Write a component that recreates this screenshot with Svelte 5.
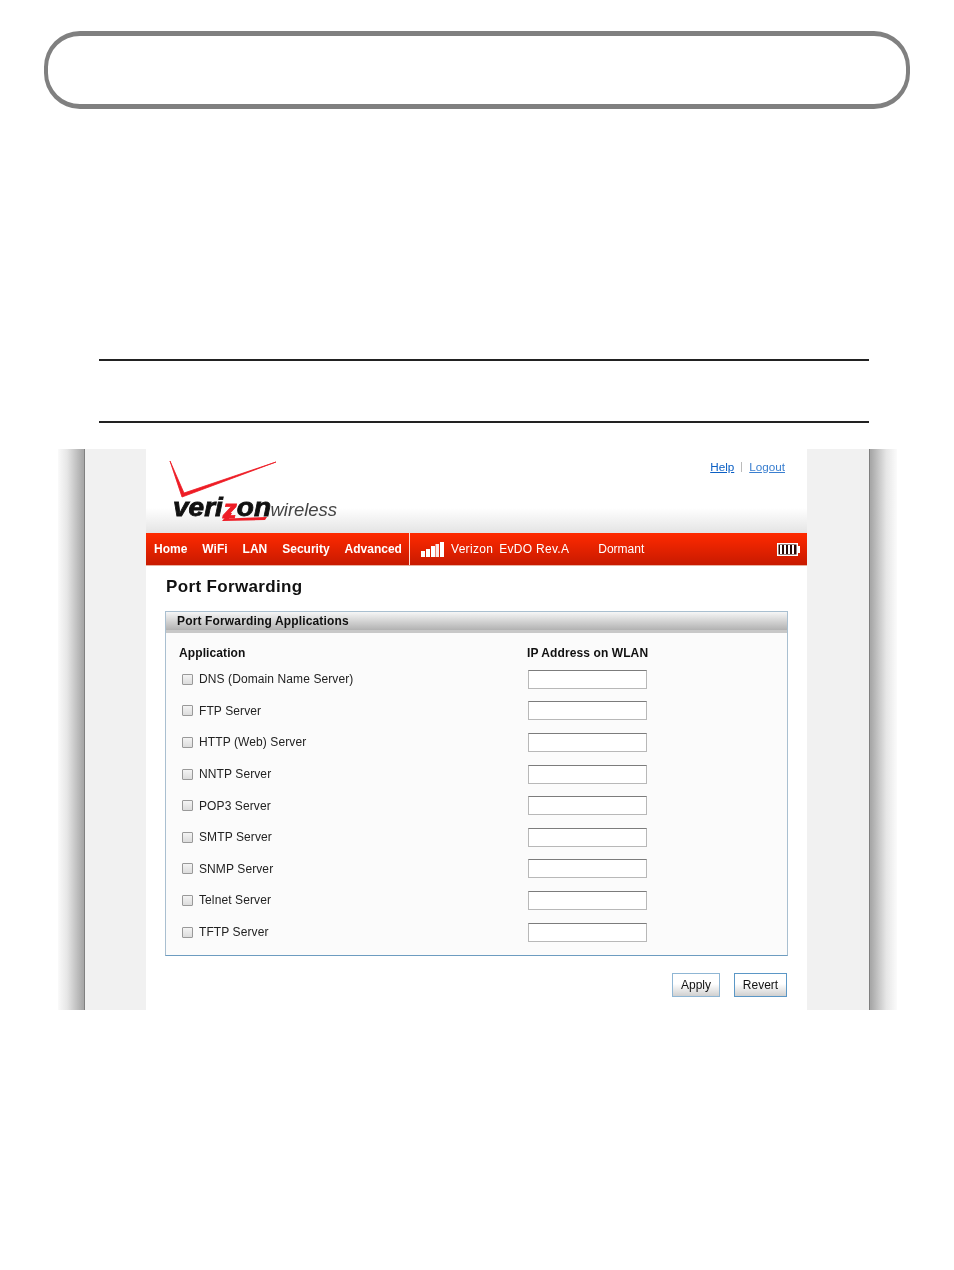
<script>
  const nav = ['Home', 'WiFi', 'LAN', 'Security', 'Advanced'];
  const apps = [
    'DNS (Domain Name Server)',
    'FTP Server',
    'HTTP (Web) Server',
    'NNTP Server',
    'POP3 Server',
    'SMTP Server',
    'SNMP Server',
    'Telnet Server',
    'TFTP Server'
  ];
</script>

<div class="page">
  <div class="pill"></div>
  <div class="rules"></div>

  <div class="shot">
    <div class="shade left"></div>
    <div class="side"></div>
    <div class="main">
      <div class="top">
        <div class="logo">
          <svg width="112" height="76" viewBox="0 0 112 76">
            <path d="M1 12 L13 48 L107 13 L15 44 Z" fill="#ee1c25" stroke="#ee1c25" stroke-width="0.800" stroke-linejoin="round" />
            <path d="M53 72 L60 64 L63 64 L60 69.500 L98 68 L96 71 Z" fill="#ee1c25" />
          </svg>
          <div class="wordmark">
            <span class="veri">veri<em>z</em>on</span><span class="wl">wireless</span>
          </div>
        </div>
        <div class="links"><a href="#help">Help</a><i></i><a class="lo" href="#logout">Logout</a></div>
      </div>

      <nav>
        <div class="tabs">
          {#each nav as n}
            <span>{n}</span>
          {/each}
        </div>
        <div class="status">
          <svg class="bars" width="23" height="15" viewBox="0 0 23 15">
            <rect x="0" y="9" width="4" height="6" fill="#fff" />
            <rect x="5" y="7" width="4" height="8" fill="#fff" />
            <rect x="10" y="4" width="4" height="11" fill="#fff" />
            <rect x="14.500" y="2" width="3.500" height="13" fill="#fff" opacity="0.900" />
            <rect x="19" y="0" width="4" height="15" fill="#fff" />
          </svg>
          <span class="net">Verizon</span>
          <span class="rev">EvDO Rev.A</span>
          <span class="dorm">Dormant</span>
          <svg class="batt" width="23" height="13" viewBox="0 0 23 13">
            <rect x="0.500" y="0.500" width="20" height="12" fill="#fff" stroke="#fff" />
            <rect x="1.500" y="1.500" width="18" height="10" fill="#2a0a05" />
            <rect x="3" y="2" width="2" height="9" fill="#fff" />
            <rect x="7" y="2" width="2" height="9" fill="#fff" />
            <rect x="11" y="2" width="2" height="9" fill="#fff" />
            <rect x="15" y="2" width="2" height="9" fill="#fff" />
            <rect x="21" y="3" width="2" height="7" fill="#fff" />
          </svg>
        </div>
      </nav>

      <div class="content">
        <h1>Port Forwarding</h1>
        <section>
          <header>Port Forwarding Applications</header>
          <div class="cols">
            <b>Application</b>
            <b class="ip">IP Address on WLAN</b>
          </div>
          {#each apps as a}
            <div class="row">
              <span class="check"></span>
              <label for={a}>{a}</label>
              <input id={a} type="text" />
            </div>
          {/each}
        </section>
        <div class="actions">
          <button class="apply">Apply</button>
          <button class="revert">Revert</button>
        </div>
      </div>
    </div>
    <div class="side"></div>
    <div class="shade right"></div>
  </div>
</div>

<style>
  :global(body) {
    margin: 0;
    background: #fff;
  }
  .page {
    height: 1270px;
    padding-top: 31px;
    box-sizing: border-box;
    font-family: "Liberation Sans", Arial, sans-serif;
    color: #111;
    overflow: hidden;
  }
  .pill {
    width: 866px;
    height: 78px;
    margin-left: 44px;
    box-sizing: border-box;
    border: 4px solid #808080;
    border-top-width: 5px;
    border-bottom-width: 5px;
    border-radius: 36px;
  }
  .rules {
    width: 770px;
    height: 60px;
    margin: 250px 0 26px 99px;
    border-top: 2px solid #222;
    border-bottom: 2px solid #222;
  }
  .shot {
    display: flex;
    width: 839px;
    height: 561px;
    margin-left: 58px;
    filter: blur(0.45px);
  }
  .shade {
    width: 28px;
  }
  .shade.left {
    width: 27px;
    background: linear-gradient(to right, #fafafa, #e6e6e6 35%, #a8a8a8 96%);
    border-right: 1px solid #808080;
    box-sizing: border-box;
  }
  .shade.right {
    background: linear-gradient(to left, #fbfbfb, #e6e6e6 40%, #a8a8a8 96%);
    border-left: 1px solid #808080;
    box-sizing: border-box;
  }
  .side {
    width: 61px;
    background: #f1f1f1;
  }
  .side:nth-of-type(4) {
    width: 62px;
  }
  .main {
    width: 661px;
    background: #fff;
    display: flex;
    flex-direction: column;
  }
  .top {
    height: 84px;
    position: relative;
    background: linear-gradient(to bottom, #fff 70%, #e4e4e4);
  }
  .logo {
    position: absolute;
    left: 23px;
    top: 0;
  }
  .logo svg {
    display: block;
  }
  .wordmark {
    position: absolute;
    left: 4px;
    top: 43px;
    width: 180px;
    white-space: nowrap;
    line-height: 30px;
  }
  .veri {
    display: inline-block;
    font-size: 25px;
    font-weight: 700;
    font-style: italic;
    letter-spacing: 0;
    color: #111;
    -webkit-text-stroke: 0.8px #111;
    transform: scaleX(1.12);
    transform-origin: left center;
  }
  .veri em {
    position: relative;
    top: 2px;
    color: #ee1c25;
    -webkit-text-stroke: 0.8px #ee1c25;
  }
  .wl {
    font-size: 18.500px;
    font-style: italic;
    color: #444;
    margin-left: 10px;
    letter-spacing: -0.05px;
  }
  .links {
    position: absolute;
    right: 22px;
    top: 11px;
    display: flex;
    align-items: center;
    font-size: 11.700px;
    line-height: 14px;
  }
  .links a {
    color: #0b5fc4;
  }
  .links a.lo {
    color: #3a7fd0;
  }
  .links i {
    width: 1px;
    height: 10px;
    background: #bbb;
    margin: 0 7px;
  }
  nav {
    height: 33px;
    display: flex;
    background: linear-gradient(to bottom, #ff2a00, #c81a00);
    border-bottom: 1px solid #e8b0a0;
    box-sizing: border-box;
    color: #fff;
    font-size: 12px;
  }
  .tabs {
    width: 264px;
    padding-left: 8px;
    box-sizing: border-box;
    display: flex;
    gap: 15px;
    align-items: center;
    font-weight: 700;
    border-right: 1px solid #ffd9d0;
  }
  .status {
    flex: 1;
    display: flex;
    align-items: center;
    padding-left: 11px;
    padding-right: 7px;
    position: relative;
    letter-spacing: 0.3px;
  }
  .bars {
    margin-right: 7px;
  }
  .net {
    margin-right: 6px;
  }
  .dorm {
    margin-left: 29px;
    letter-spacing: 0;
  }
  .batt {
    margin-left: auto;
  }
  .content {
    padding: 0 19px;
  }
  h1 {
    margin: 10px 0 0 1px;
    font-size: 17px;
    line-height: 22px;
    font-weight: 700;
    letter-spacing: 0.35px;
    color: #111;
  }
  section {
    margin-top: 13px;
    width: 623px;
    height: 345px;
    box-sizing: border-box;
    border: 1px solid #a9bfd0;
    border-bottom-color: #6d9cc0;
    background: #fbfbfb;
  }
  header {
    height: 21px;
    padding-left: 11px;
    font-size: 12px;
    font-weight: 700;
    line-height: 18px;
    letter-spacing: 0.15px;
    background: linear-gradient(to bottom, #f6f6f6, #b0b0b0 88%, #c8c8c8 88%);
  }
  .cols {
    display: flex;
    height: 29px;
    padding: 10px 0 0 13px;
    box-sizing: border-box;
    font-size: 12px;
    line-height: 20px;
    letter-spacing: 0.1px;
  }
  .cols b {
    width: 348px;
    font-weight: 700;
  }
  .cols .ip {
    width: auto;
  }
  .row {
    display: flex;
    align-items: center;
    height: 31.600px;
    font-size: 12px;
    color: #222;
    padding-top: 3px;
    box-sizing: border-box;
  }
  .check {
    width: 9px;
    height: 9px;
    margin-left: 16px;
    border: 1px solid #999;
    border-radius: 1px;
    background: linear-gradient(to bottom, #f4f4f4, #dcdcdc);
  }
  label {
    width: 329px;
    margin-left: 6px;
    letter-spacing: 0.1px;
  }
  input {
    width: 119px;
    height: 19px;
    padding: 0;
    box-sizing: border-box;
    border: 1px solid #b8b8b8;
    border-top-color: #7c7c7c;
    background: #fff;
  }
  .actions {
    display: flex;
    justify-content: flex-end;
    gap: 14px;
    width: 622px;
    margin-top: 17px;
  }
  button {
    height: 24px;
    padding: 0;
    font: 12px "Liberation Sans", Arial, sans-serif;
    color: #111;
    background: linear-gradient(to bottom, #fff 45%, #d0d0d0);
    border: 1px solid #8fb6d4;
  }
  .apply {
    width: 48px;
  }
  .revert {
    width: 53px;
    border-color: #5b97c6;
  }
</style>
